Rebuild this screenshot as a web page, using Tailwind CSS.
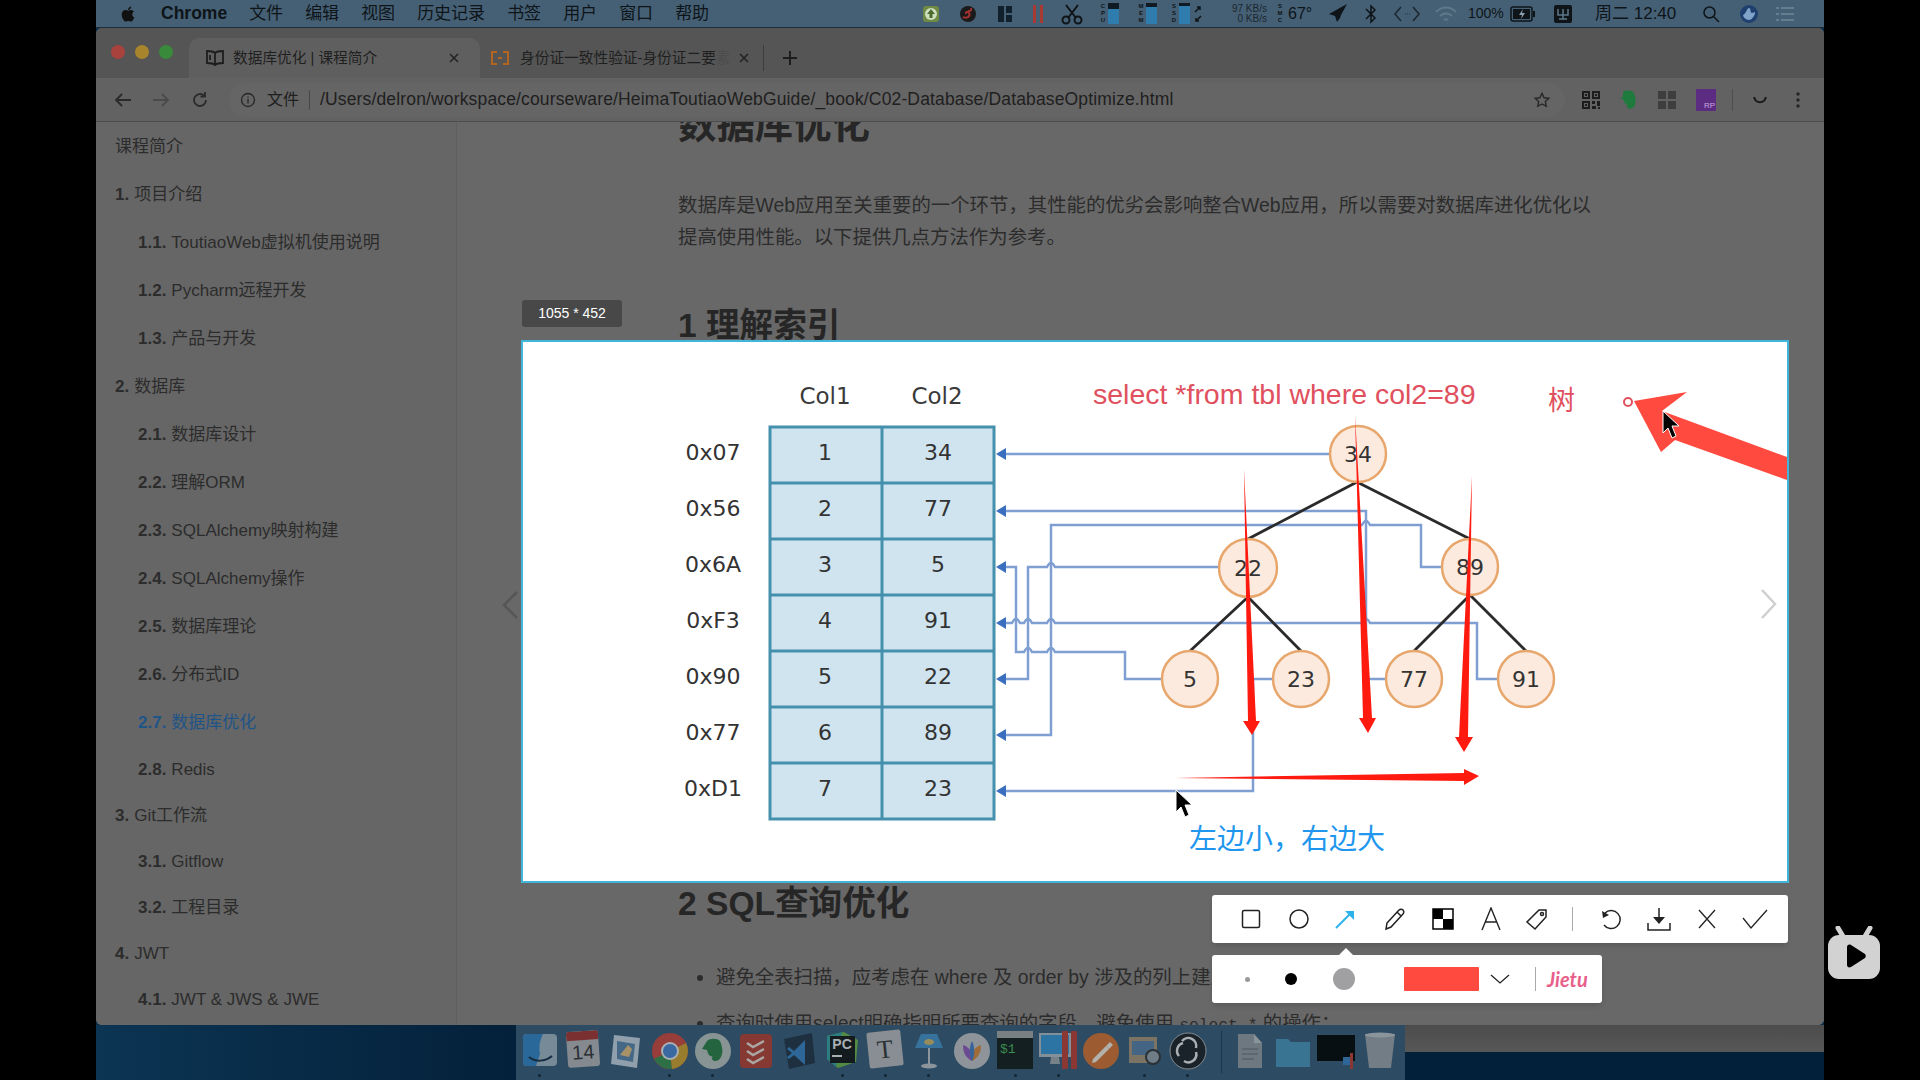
<!DOCTYPE html>
<html lang="zh">
<head>
<meta charset="utf-8">
<title>数据库优化</title>
<script src="https://cdn.jsdelivr.net/npm/@tailwindcss/browser@4"></script>
</head>
<body class="bg-black">
<div class="relative w-[1920px] h-[1080px] overflow-hidden bg-black [font-family:'Liberation_Sans','Noto_Sans_CJK_SC',sans-serif]">
  <div class="ml-[96px] w-[1728px] h-[1080px] flex flex-col bg-[#0a2c47]">

    <!-- menu bar -->
    <div class="h-[28px] shrink-0 flex items-center bg-[#456075] border-b border-[#1d2d3a] text-[#0e1418]">
      <div class="w-[826px] shrink-0 flex items-center text-[17px] gap-[22px]">
        <svg class="ml-[22px] -mr-[2px]" width="20" height="20" viewBox="0 0 24 24" fill="#111"><path d="M17.05 20.28c-.98.95-2.05.8-3.08.35-1.09-.46-2.09-.48-3.24 0-1.44.62-2.2.44-3.06-.35C2.79 15.25 3.51 7.59 9.05 7.31c1.35.07 2.29.74 3.08.8 1.18-.24 2.31-.93 3.57-.84 1.51.12 2.65.72 3.4 1.8-3.12 1.87-2.38 5.98.48 7.13-.57 1.5-1.31 2.99-2.54 4.09zM12.03 7.25c-.15-2.23 1.66-4.07 3.74-4.25.29 2.58-2.34 4.5-3.74 4.25z"/></svg>
        <span class="font-bold text-[17.5px] ml-[3px]">Chrome</span>
        <span>文件</span><span>编辑</span><span>视图</span><span>历史记录</span><span>书签</span><span>用户</span><span>窗口</span><span>帮助</span>
      </div>
      <div class="flex items-center text-[16px]">
        <svg width="18" height="20" viewBox="0 0 18 20"><rect x="1" y="2" width="16" height="16" rx="3" fill="#6f8a45"/><circle cx="9" cy="10" r="6" fill="#cfe0c0"/><path d="M9 5l4 5h-2.500v4h-3v-4H5z" fill="#4c6b2e"/></svg>
        <svg class="ml-[19px]" width="18" height="20" viewBox="0 0 18 20"><circle cx="9" cy="10" r="8" fill="#1a1a1a"/><path d="M4 13c4 2 8-1 6-4-1-2-4-1-3 1M12 4c1 3-1 3-3 3" stroke="#a03030" stroke-width="2" fill="none"/></svg>
        <svg class="ml-[20px]" width="16" height="18" viewBox="0 0 16 18" fill="#10202c"><rect x="1" y="1" width="6" height="16"/><rect x="9" y="1" width="6" height="7"/><rect x="9" y="10" width="6" height="7"/></svg>
        <svg class="ml-[19px]" width="12" height="20" viewBox="0 0 12 20" fill="#a83a34"><rect x="1" y="1" width="3" height="18"/><rect x="8" y="1" width="3" height="18"/></svg>
        <svg class="ml-[16px]" width="24" height="22" viewBox="0 0 24 22" fill="none" stroke="#0e1418" stroke-width="2"><path d="M6 2l10 13M18 2L8 15"/><circle cx="6" cy="17" r="3.500"/><circle cx="18" cy="17" r="3.500"/></svg>
        <div class="ml-[16px] w-[20px] shrink-0 flex items-center gap-[2px]"><span class="w-[6px] shrink-0 flex flex-col items-center text-[6px] leading-[7px] font-bold"><span>C</span><span>P</span><span>U</span></span><span class="w-[11px] h-[21px] shrink-0 bg-[#0f1a22] flex items-end"><span class="w-full h-[15px] bg-[#2f7cae]"></span></span></div>
        <div class="ml-[18px] w-[20px] shrink-0 flex items-center gap-[2px]"><span class="w-[6px] shrink-0 flex flex-col items-center text-[6px] leading-[7px] font-bold"><span>M</span><span>E</span><span>M</span></span><span class="w-[11px] h-[21px] shrink-0 bg-[#0f1a22] flex items-end"><span class="w-full h-[17px] bg-[#2f7cae]"></span></span></div>
        <div class="ml-[13px] w-[20px] shrink-0 flex items-center gap-[2px]"><span class="w-[6px] shrink-0 flex flex-col items-center text-[6px] leading-[7px] font-bold"><span>S</span><span>S</span><span>D</span></span><span class="w-[11px] h-[21px] shrink-0 bg-[#0f1a22] flex items-end"><span class="w-full h-[18px] bg-[#2f7cae]"></span></span></div>
        <svg class="ml-[2px]" width="10" height="20" viewBox="0 0 10 20" fill="none" stroke="#0e1418" stroke-width="1.500"><path d="M2 8l5-5M4 3h3v3M8 12l-5 5M6 17H3v-3"/></svg>
        <div class="ml-[24px] w-[40px] text-[10px] leading-[10px] text-right text-[#1c262e]"><div>97 KB/s</div><div>0 KB/s</div></div>
        <span class="ml-[9px] w-[8px] flex flex-col items-center text-[6px] leading-[7px] font-bold"><span>S</span><span>M</span><span>C</span></span>
        <span class="ml-[4px] w-[30px] text-[16px]">67°</span>
        <svg class="ml-[10px]" width="20" height="22" viewBox="0 0 20 22" fill="#0e1418"><path d="M19 1L1 11l6 2 2 6 3-4 1-3z"/></svg>
        <svg class="ml-[16px]" width="14" height="20" viewBox="0 0 14 20" fill="none" stroke="#0e1418" stroke-width="1.500"><path d="M2 5l9 9-4 4V2l4 4-9 9"/></svg>
        <svg class="ml-[15px]" width="28" height="20" viewBox="0 0 28 20" fill="none" stroke="#1c262e" stroke-width="1.500"><path d="M8 3l-6 7 6 7M20 3l6 7-6 7"/><path d="M12 10h.8M14 10h.8M16 10h.8" stroke-width="1"/></svg>
        <svg class="ml-[13px]" width="24" height="20" viewBox="0 0 24 20" fill="none" stroke="#5f7889" stroke-width="2"><path d="M2 8c6-6 14-6 20 0M6 12c4-3.500 8-3.500 12 0M10 16c1.500-1.200 2.500-1.200 4 0"/></svg>
        <span class="ml-[10px] w-[38px] text-[14px] whitespace-nowrap">100%</span>
        <svg class="ml-[4px]" width="26" height="16" viewBox="0 0 26 16"><rect x="1" y="1" width="21" height="14" rx="2" fill="none" stroke="#0e1418" stroke-width="1.500"/><rect x="3" y="3" width="17" height="10" fill="#0e1418"/><path d="M13 3l-4 6h3l-1 4 4-6h-3z" fill="#8aa0b0"/><rect x="23" y="5" width="2" height="6" fill="#0e1418"/></svg>
        <svg class="ml-[17px]" width="20" height="20" viewBox="0 0 20 20"><rect x="1" y="1" width="18" height="18" rx="2" fill="#0e1418"/><path d="M5 5v6h10V5M10 5v10M6 15h8" stroke="#5f7889" stroke-width="1.500" fill="none"/></svg>
        <span class="ml-[22px] w-[80px] text-[17px] whitespace-nowrap">周二 12:40</span>
        <svg class="ml-[27px]" width="18" height="18" viewBox="0 0 18 18" fill="none" stroke="#0e1418" stroke-width="1.500"><circle cx="7.500" cy="7.500" r="5.500"/><path d="M11.500 11.500L17 17"/></svg>
        <svg class="ml-[19px]" width="20" height="20" viewBox="0 0 20 20"><circle cx="10" cy="10" r="9" fill="#1f3f6e"/><path d="M4 11c3-1 4-7 6-7s1 5 3 5 3-2 3 0-3 7-6 7-6-3-6-5z" fill="#7fa3c9"/></svg>
        <svg class="ml-[17px]" width="18" height="16" viewBox="0 0 18 16" stroke="#6f8798" stroke-width="1.500"><path d="M0 2h3M5 2h13M0 8h3M5 8h13M0 14h3M5 14h13"/></svg>
      </div>
    </div>

    <!-- chrome window -->
    <div class="h-[997px] shrink-0 flex flex-col overflow-hidden rounded-t-[6px] rounded-b-[6px] bg-[#686868]">
      <!-- tabs -->
      <div class="h-[50px] shrink-0 flex items-end bg-[#555555] text-[14.7px] text-[#1f1f1f]">
        <div class="w-[93px] shrink-0 h-full flex items-center pl-[15px] gap-[10px] pb-[2px]">
          <span class="w-[14px] h-[14px] rounded-full bg-[#a8423d]"></span>
          <span class="w-[14px] h-[14px] rounded-full bg-[#a8842c]"></span>
          <span class="w-[14px] h-[14px] rounded-full bg-[#3a8a3c]"></span>
        </div>
        <div class="w-[291px] shrink-0 h-[40px] bg-[#5f5f5f] rounded-t-[10px] flex items-center pl-[16px]">
          <svg class="shrink-0" width="20" height="18" viewBox="0 0 20 18" fill="none" stroke="#1d1d1d" stroke-width="1.800"><path d="M10 4C8 2 5 2 2 2v12c3 0 6 0 8 2 2-2 5-2 8-2V2c-3 0-6 0-8 2zM10 4v12M5 6v5"/></svg>
          <span class="ml-[8px] w-[215px] shrink-0 whitespace-nowrap">数据库优化 | 课程简介</span>
          <svg class="shrink-0" width="12" height="12" viewBox="0 0 12 12" stroke="#222" stroke-width="1.500"><path d="M2 2l8 8M10 2l-8 8"/></svg>
        </div>
        <div class="h-[40px] flex items-center pl-[10px]">
          <svg class="shrink-0" width="20" height="16" viewBox="0 0 20 16" fill="none" stroke="#b3641f" stroke-width="2"><path d="M7 2H2v12h5M13 2h5v12h-5M8 8h4"/></svg>
          <span class="ml-[10px] w-[211px] shrink-0 whitespace-nowrap">身份证一致性验证-身份证二要<span class="text-[#4c4c4c]">素</span></span>
          <svg class="ml-[7px] shrink-0" width="12" height="12" viewBox="0 0 12 12" stroke="#222" stroke-width="1.500"><path d="M2 2l8 8M10 2l-8 8"/></svg>
          <span class="ml-[13px] w-px h-[26px] shrink-0 bg-[#3d3d3d]"></span>
          <svg class="ml-[18px] shrink-0" width="16" height="16" viewBox="0 0 16 16" stroke="#1d1d1d" stroke-width="2"><path d="M8 1v14M1 8h14"/></svg>
        </div>
      </div>
      <!-- toolbar -->
      <div class="h-[44px] shrink-0 flex items-center bg-[#626262] border-b border-[#4d4d4d] text-[16px] text-[#202020]">
        <svg class="ml-[18px]" width="18" height="16" viewBox="0 0 18 16" fill="none" stroke="#2a2a2a" stroke-width="1.800"><path d="M17 8H2M8 2L2 8l6 6"/></svg>
        <svg class="ml-[20px]" width="18" height="16" viewBox="0 0 18 16" fill="none" stroke="#4a4a4a" stroke-width="1.800"><path d="M1 8h15M10 2l6 6-6 6"/></svg>
        <svg class="ml-[21px]" width="18" height="18" viewBox="0 0 18 18" fill="none" stroke="#2a2a2a" stroke-width="1.800"><path d="M15 9a6 6 0 1 1-2-4.500M14 1v4.500H9.500"/></svg>
        <div class="ml-[20px] w-[1336px] h-[34px] rounded-[17px] bg-[#656565] flex items-center">
          <svg class="ml-[11px]" width="16" height="16" viewBox="0 0 16 16" fill="none" stroke="#262626" stroke-width="1.300"><circle cx="8" cy="8" r="6.500"/><path d="M8 7v4.500M8 4.500v1.200"/></svg>
          <span class="ml-[11px]">文件</span>
          <span class="ml-[10px] w-px h-[20px] bg-[#474747]"></span>
          <span class="ml-[10px] whitespace-nowrap text-[17.5px] tracking-[0.15px] [font-family:'Liberation_Sans',sans-serif]">/Users/delron/workspace/courseware/HeimaToutiaoWebGuide/_book/C02-Database/DatabaseOptimize.html</span>
        </div>
        <svg class="-ml-[32px]" width="18" height="18" viewBox="0 0 24 24" fill="none" stroke="#262626" stroke-width="1.800"><path d="M12 3l2.800 6 6.400.7-4.800 4.300 1.300 6.400L12 17.200 6.300 20.400l1.300-6.400L2.800 9.700 9.200 9z"/></svg>
        <svg class="ml-[30px]" width="20" height="20" viewBox="0 0 20 20" fill="#1d1d1d"><path d="M1 1h8v8H1zM3 3v4h4V3zM4 4h2v2H4zM11 1h8v8h-8zM13 3v4h4V3zM14 4h2v2h-2zM1 11h8v8H1zM3 13v4h4v-4zM4 14h2v2H4zM11 11h3v3h-3zM16 11h3v5h-3zM11 16h4v3h-4zM17 17h2v2h-2z" fill-rule="evenodd"/></svg>
        <svg class="ml-[17px]" width="20" height="22" viewBox="0 0 20 22"><path d="M5 3c2-2 9-2 11 1 2 5 2 9 1 12-1 4-7 5-8 2-1-2 2-3 3-2-4 0-6-2-7-6L1 9l4-1z" fill="#1f7a3e"/></svg>
        <svg class="ml-[20px]" width="18" height="18" viewBox="0 0 18 18" fill="#3e3e3e"><rect x="0" y="0" width="8" height="8"/><rect x="10" y="0" width="8" height="8"/><rect x="0" y="10" width="8" height="8"/><rect x="10" y="10" width="8" height="8"/></svg>
        <div class="ml-[20px] w-[20px] h-[22px] bg-[#5b2c82] flex items-end justify-end text-[8px] leading-[10px] text-[#c9a7e0] pr-[1px]">RP</div>
        <span class="ml-[16px] w-px h-[22px] bg-[#4d4d4d]"></span>
        <svg class="ml-[18px]" width="18" height="10" viewBox="0 0 18 10" fill="none" stroke="#1a1a1a" stroke-width="2"><path d="M3 2c2 7 10 7 12 0"/></svg>
        <svg class="ml-[27px]" width="4" height="18" viewBox="0 0 4 18" fill="#262626"><circle cx="2" cy="3" r="1.700"/><circle cx="2" cy="9" r="1.700"/><circle cx="2" cy="15" r="1.700"/></svg>
      </div>
      <!-- body -->
      <div class="flex-1 flex min-h-0 text-[#2c2c2c]">
        <div class="w-[361px] shrink-0 border-r border-[#5f5f5f] bg-[#666666] text-[17px] overflow-hidden flex flex-col">
          <div class="h-[49px] shrink-0 flex items-center pl-[19px]">课程简介</div>
          <div class="h-12 shrink-0 flex items-center pl-[19px]"><b class="mr-[5px]">1.</b>项目介绍</div>
          <div class="h-12 shrink-0 flex items-center pl-[42px]"><b class="mr-[5px]">1.1.</b>ToutiaoWeb虚拟机使用说明</div>
          <div class="h-12 shrink-0 flex items-center pl-[42px]"><b class="mr-[5px]">1.2.</b>Pycharm远程开发</div>
          <div class="h-12 shrink-0 flex items-center pl-[42px]"><b class="mr-[5px]">1.3.</b>产品与开发</div>
          <div class="h-12 shrink-0 flex items-center pl-[19px]"><b class="mr-[5px]">2.</b>数据库</div>
          <div class="h-12 shrink-0 flex items-center pl-[42px]"><b class="mr-[5px]">2.1.</b>数据库设计</div>
          <div class="h-12 shrink-0 flex items-center pl-[42px]"><b class="mr-[5px]">2.2.</b>理解ORM</div>
          <div class="h-12 shrink-0 flex items-center pl-[42px]"><b class="mr-[5px]">2.3.</b>SQLAlchemy映射构建</div>
          <div class="h-12 shrink-0 flex items-center pl-[42px]"><b class="mr-[5px]">2.4.</b>SQLAlchemy操作</div>
          <div class="h-12 shrink-0 flex items-center pl-[42px]"><b class="mr-[5px]">2.5.</b>数据库理论</div>
          <div class="h-12 shrink-0 flex items-center pl-[42px]"><b class="mr-[5px]">2.6.</b>分布式ID</div>
          <div class="h-12 shrink-0 flex items-center pl-[42px] text-[#1f5488]"><b class="mr-[5px]">2.7.</b>数据库优化</div>
          <div class="h-[46px] shrink-0 flex items-center pl-[42px]"><b class="mr-[5px]">2.8.</b>Redis</div>
          <div class="h-[46px] shrink-0 flex items-center pl-[19px]"><b class="mr-[5px]">3.</b>Git工作流</div>
          <div class="h-[46px] shrink-0 flex items-center pl-[42px]"><b class="mr-[5px]">3.1.</b>Gitflow</div>
          <div class="h-[46px] shrink-0 flex items-center pl-[42px]"><b class="mr-[5px]">3.2.</b>工程目录</div>
          <div class="h-[46px] shrink-0 flex items-center pl-[19px]"><b class="mr-[5px]">4.</b>JWT</div>
          <div class="h-[45px] shrink-0 flex items-center pl-[42px]"><b class="mr-[5px]">4.1.</b>JWT &amp; JWS &amp; JWE</div>
        </div>
        <div class="flex-1 overflow-hidden pl-[221px] text-[19.4px] leading-[32px] bg-[#686868]">
          <h1 class="-mt-[16px] text-[38.4px] leading-[38px] font-bold text-[#262626]">数据库优化</h1>
          <p class="mt-[45px] w-[920px]">数据库是Web应用至关重要的一个环节，其性能的优劣会影响整合Web应用，所以需要对数据库进化优化以提高使用性能。以下提供几点方法作为参考。</p>
          <h2 class="mt-[53px] text-[33.6px] leading-[40px] font-bold text-[#262626]">1 理解索引</h2>
          <h2 class="mt-[538px] text-[33.6px] leading-[40px] font-bold text-[#262626]">2 SQL查询优化</h2>
          <ul class="mt-[37px] list-disc pl-[38px] w-[1000px]">
            <li class="whitespace-nowrap">避免全表扫描，应考虑在 where 及 order by 涉及的列上建立索引；</li>
            <li class="mt-[14px] whitespace-nowrap">查询时使用select明确指明所要查询的字段，避免使用 <span class="[font-family:'Liberation_Mono',monospace] text-[16.3px]">select *</span> 的操作；</li>
          </ul>
        </div>
      </div>
    </div>

    <!-- bottom: desktop and dock -->
    <div class="flex-1 flex min-h-0">
      <div class="w-[420px] bg-gradient-to-r from-[#0c3553] to-[#04203a]"></div>
      <div class="w-[889px] h-full bg-[#2d4c63] flex items-start pl-[2.4px] [&>div]:opacity-80">
        <div class="relative w-[43.2px] h-full flex justify-center pt-[6px]"><svg width="38" height="40" viewBox="0 0 38 40"><rect x="2" y="3" width="34" height="32" rx="4" fill="#8a9aa5"/><path d="M2 7a4 4 0 0 1 4-4h16c-4 8-4 14-3 20l-4 12H6a4 4 0 0 1-4-4z" fill="#2a6fa8"/><path d="M8 26c6 5 16 5 23-1" stroke="#10263a" stroke-width="2" fill="none"/></svg><span class="absolute bottom-[3px] w-[3px] h-[3px] rounded-full bg-[#0c1a26]"></span></div>
        <div class="relative w-[43.2px] h-full flex justify-center pt-[6px]"><div class="w-[32px] h-[36px] bg-[#9a9a9a] rounded-[3px] rotate-[-4deg] overflow-hidden flex flex-col items-center text-[#2a2a2a]"><span class="w-full h-[9px] bg-[#8e2a25]"></span><span class="text-[20px] leading-[24px]">14</span></div></div>
        <div class="relative w-[43.2px] h-full flex justify-center pt-[6px]"><svg width="36" height="40" viewBox="0 0 36 40"><path d="M6 4l26 3-3 30-26-4z" fill="#a9b4bd"/><path d="M9 10l18 3-2 18-16-3z" fill="#4c6f90"/><path d="M12 24l8-10 4 4-3 8z" fill="#c8a468"/></svg></div>
        <div class="relative w-[43.2px] h-full flex justify-center pt-[6px]"><svg width="40" height="40" viewBox="0 0 40 40"><circle cx="20" cy="20" r="18" fill="#b23a30"/><path d="M20 20L4 28a18 18 0 0 0 18 10z" fill="#2f7a3e"/><path d="M20 20l16-8a18 18 0 0 1-14 26z" fill="#b58a22"/><circle cx="20" cy="20" r="9" fill="#c9c9c9"/><circle cx="20" cy="20" r="7" fill="#3e6fb0"/></svg><span class="absolute bottom-[3px] w-[3px] h-[3px] rounded-full bg-[#0c1a26]"></span></div>
        <div class="relative w-[43.2px] h-full flex justify-center pt-[6px]"><svg width="38" height="40" viewBox="0 0 38 40"><circle cx="19" cy="20" r="18" fill="#9fa6a0"/><path d="M13 10c3-3 10-3 13 0 3 7 3 12 1 16-2 5-8 5-9 2-1-2 2-3 3-2-5 0-7-2-8-7l-5-1z" fill="#226c38"/></svg><span class="absolute bottom-[3px] w-[3px] h-[3px] rounded-full bg-[#0c1a26]"></span></div>
        <div class="relative w-[43.2px] h-full flex justify-center pt-[6px]"><svg width="38" height="40" viewBox="0 0 38 40"><rect x="3" y="3" width="32" height="34" rx="4" fill="#9c3527"/><path d="M10 12l6 4 11-6M10 20l6 4 11-6M10 28l6 4 11-6" stroke="#c9bdb5" stroke-width="2.500" fill="none"/></svg></div>
        <div class="relative w-[43.2px] h-full flex justify-center pt-[6px]"><svg width="38" height="40" viewBox="0 0 38 40"><path d="M4 8l28-6 3 30-26 6z" fill="#1b2a38"/><path d="M25 9L14 20l-5-4-2 2 5 4-5 4 2 2 5-4 11 10V9z" fill="#2f6ea5"/></svg></div>
        <div class="relative w-[43.2px] h-full flex justify-center pt-[6px]"><div class="relative w-[36px] h-[38px]"><svg class="absolute inset-0" width="36" height="38" viewBox="0 0 36 38"><path d="M3 5L20 1l14 8-2 22-18 6L3 28z" fill="#5e9b3a"/><path d="M3 5L18 1 12 36 3 28z" fill="#2b8a86"/></svg><div class="absolute left-[6px] top-[5px] w-[25px] h-[27px] bg-[#0f0f0f] text-[#c9c9c9] text-[14px] leading-[16px] font-bold pl-[2px]">PC<div class="mt-[3px] w-[10px] h-[2px] bg-[#c9c9c9]"></div></div></div><span class="absolute bottom-[3px] w-[3px] h-[3px] rounded-full bg-[#0c1a26]"></span></div>
        <div class="relative w-[43.2px] h-full flex justify-center pt-[6px]"><div class="w-[34px] h-[36px] bg-[#9f9f9f] rotate-[-6deg] rounded-[2px] flex items-center justify-center text-[26px] text-[#2a2a2a] [font-family:'Liberation_Serif',serif]">T</div><span class="absolute bottom-[3px] w-[3px] h-[3px] rounded-full bg-[#0c1a26]"></span></div>
        <div class="relative w-[43.2px] h-full flex justify-center pt-[6px]"><svg width="36" height="40" viewBox="0 0 36 40"><path d="M10 3h16l6 14H4z" fill="#3a7cac"/><ellipse cx="18" cy="11" rx="5" ry="3" fill="#b59c5a"/><path d="M18 17v17" stroke="#a4a8ab" stroke-width="2"/><ellipse cx="18" cy="35" rx="8" ry="2.500" fill="#a4a8ab"/></svg><span class="absolute bottom-[3px] w-[3px] h-[3px] rounded-full bg-[#0c1a26]"></span></div>
        <div class="relative w-[43.2px] h-full flex justify-center pt-[6px]"><svg width="38" height="40" viewBox="0 0 38 40"><circle cx="19" cy="20" r="18" fill="#a7a7a7"/><path d="M19 30c-6-3-9-8-9-16 4 1 7 4 9 8z" fill="#7b4aa0"/><path d="M19 30c6-3 9-8 9-16-4 1-7 4-9 8z" fill="#b9742e"/><path d="M19 30c-3-6-3-14 0-20 3 6 3 14 0 20z" fill="#3c6aa8"/></svg></div>
        <div class="relative w-[43.2px] h-full flex justify-center pt-[6px]"><div class="w-[36px] h-[38px] bg-[#0e1412] border-t-[7px] border-[#8d8d8d] text-[#3f9a4a] text-[13px] leading-[14px] pl-[3px] pt-[5px] [font-family:'Liberation_Mono',monospace]">$1</div><span class="absolute bottom-[3px] w-[3px] h-[3px] rounded-full bg-[#0c1a26]"></span></div>
        <div class="relative w-[43.2px] h-full flex justify-center pt-[6px]"><svg width="40" height="40" viewBox="0 0 40 40"><rect x="1" y="2" width="32" height="24" fill="#9aa2a6"/><rect x="3" y="4" width="28" height="19" fill="#2c7fb5"/><path d="M13 26h8l1 7H12z" fill="#8a8f92"/><rect x="24" y="0" width="6" height="38" rx="1" fill="#a3342a"/><rect x="33" y="0" width="6" height="38" rx="1" fill="#a3342a"/></svg><span class="absolute bottom-[3px] w-[3px] h-[3px] rounded-full bg-[#0c1a26]"></span></div>
        <div class="relative w-[43.2px] h-full flex justify-center pt-[6px]"><svg width="38" height="40" viewBox="0 0 38 40"><circle cx="19" cy="20" r="18" fill="#b95f25"/><path d="M11 28l13-13 3 3-13 13-4 1z" fill="#d4cbc0"/><path d="M24 15l4-4 3 3-4 4z" fill="#d4cbc0"/></svg></div>
        <div class="relative w-[43.2px] h-full flex justify-center pt-[6px]"><svg width="38" height="40" viewBox="0 0 38 40"><rect x="3" y="6" width="28" height="26" fill="#8f7f66"/><rect x="6" y="10" width="22" height="14" fill="#4a6c8c"/><circle cx="27" cy="26" r="7" fill="#7f8a8f" stroke="#2a2a2a" stroke-width="2"/></svg><span class="absolute bottom-[3px] w-[3px] h-[3px] rounded-full bg-[#0c1a26]"></span></div>
        <div class="relative w-[43.2px] h-full flex justify-center pt-[6px]"><svg width="38" height="40" viewBox="0 0 38 40"><circle cx="19" cy="20" r="18" fill="#17191c" stroke="#9a9a9a" stroke-width="1"/><path d="M13 10a8 8 0 0 1 14 7M27 21a8 8 0 0 1-12 9M10 25a8 8 0 0 1 4-13" stroke="#c9c9c9" stroke-width="2.500" fill="none"/></svg><span class="absolute bottom-[3px] w-[3px] h-[3px] rounded-full bg-[#0c1a26]"></span></div>
        <span class="ml-[11.400px] mt-[6px] w-px h-[42px] bg-[#1c3548]"></span>
        <div class="ml-[6.800px] relative w-[43.2px] h-full flex justify-center pt-[6px]"><svg width="30" height="40" viewBox="0 0 30 40"><path d="M3 3h16l8 9v25H3z" fill="#7d8388"/><path d="M19 3v9h8" fill="#a0a5a8"/><path d="M7 18h16M7 23h16M7 28h12" stroke="#62686c" stroke-width="1.500"/></svg></div>
        <div class="relative w-[43.2px] h-full flex justify-center pt-[6px]"><svg width="38" height="40" viewBox="0 0 38 40"><path d="M2 8h12l3 3h19v25H2z" fill="#3e7ea0"/></svg></div>
        <div class="relative w-[43.2px] h-full flex justify-center pt-[6px]"><svg width="40" height="40" viewBox="0 0 40 40"><rect x="0" y="4" width="38" height="26" fill="#000"/><rect x="26" y="26" width="8" height="8" fill="#2f6ea5"/><rect x="33" y="22" width="3" height="16" fill="#a3342a"/></svg></div>
        <div class="relative w-[43.2px] h-full flex justify-center pt-[6px]"><svg width="34" height="40" viewBox="0 0 34 40"><path d="M2 3h30l-4 34H6z" fill="#848a8e"/><ellipse cx="17" cy="4" rx="15" ry="2.500" fill="#a1a6a9"/></svg></div>
      </div>
      <div class="flex-1 flex flex-col">
        <div class="h-[27px] shrink-0 bg-gradient-to-b from-[#4c4c4c] to-[#575757]"></div>
        <div class="flex-1 bg-[#03203a]"></div>
      </div>
    </div>
  </div>

  <!-- prev chevron -->
  <svg class="absolute left-[501px] top-[590px]" width="18" height="30" viewBox="0 0 18 30" fill="none" stroke="#565656" stroke-width="2.500"><path d="M16 2L3 15l13 13"/></svg>

  <!-- size label -->
  <div class="absolute left-[522px] top-[300px] w-[100px] h-[27px] rounded-[3px] bg-[#484848] text-white text-[14px] flex items-center justify-center">1055 * 452</div>

  <!-- captured image -->
  <svg class="absolute left-[521px] top-[340px] [font-family:'DejaVu_Sans',sans-serif]" width="1268" height="543" viewBox="521 340 1268 543">
    <rect x="522" y="341" width="1266" height="541" fill="#fff" stroke="#3fb6da" stroke-width="2"/>
    <g font-size="23" fill="#3a3a3a" text-anchor="middle">
      <text x="825" y="404">Col1</text><text x="937" y="404">Col2</text>
    </g>
    <rect x="770" y="427" width="224" height="392" fill="#cfe4ef"/>
    <path d="M770 427h224v392H770zM770 483h224M770 539h224M770 595h224M770 651h224M770 707h224M770 763h224M882 427v392" fill="none" stroke="#4590ad" stroke-width="3"/>
    <g font-size="22" fill="#333" text-anchor="middle">
      <text x="713" y="460">0x07</text><text x="713" y="516">0x56</text><text x="713" y="572">0x6A</text><text x="713" y="628">0xF3</text><text x="713" y="684">0x90</text><text x="713" y="740">0x77</text><text x="713" y="796">0xD1</text>
      <text x="825" y="460">1</text><text x="825" y="516">2</text><text x="825" y="572">3</text><text x="825" y="628">4</text><text x="825" y="684">5</text><text x="825" y="740">6</text><text x="825" y="796">7</text>
      <text x="938" y="460">34</text><text x="938" y="516">77</text><text x="938" y="572">5</text><text x="938" y="628">91</text><text x="938" y="684">22</text><text x="938" y="740">89</text><text x="938" y="796">23</text>
    </g>
    <!-- pointers -->
    <g fill="none" stroke="#7f9fd2" stroke-width="2.500">
      <path d="M1329 454H1000"/>
      <path d="M1385 679H1366V511H1000"/>
      <path d="M1442 567H1421V525H1370Q1366 517 1362 525H1051V735H1000"/>
      <path d="M1218 567H1055Q1051 559 1047 567H1028V679H1000"/>
      <path d="M1162 679H1125V652H1055Q1051 644 1047 652H1032Q1028 644 1024 652H1016V567H1000"/>
      <path d="M1498 679H1477V623H1370Q1366 615 1362 623H1055Q1051 615 1047 623H1032Q1028 615 1024 623H1020Q1016 615 1012 623H1000"/>
      <path d="M1273 679H1253V791H1000"/>
    </g>
    <g fill="#3a6fc0">
      <path d="M996 454l10-6v12z"/><path d="M996 511l10-6v12z"/><path d="M996 567l10-6v12z"/><path d="M996 623l10-6v12z"/><path d="M996 679l10-6v12z"/><path d="M996 735l10-6v12z"/><path d="M996 791l10-6v12z"/>
    </g>
    <!-- tree -->
    <path d="M1357 482L1248 539M1357 482L1470 539M1248 597L1190 651M1248 597L1301 651M1470 595L1414 651M1470 595L1526 651" stroke="#2a2a2a" stroke-width="2.800" fill="none"/>
    <g fill="#fbeadd" stroke="#e7a66c" stroke-width="2.500">
      <ellipse cx="1358" cy="454" rx="28" ry="28"/>
      <ellipse cx="1248" cy="568" rx="29" ry="29"/>
      <ellipse cx="1470" cy="567" rx="28" ry="28"/>
      <ellipse cx="1190" cy="679" rx="28" ry="28"/>
      <ellipse cx="1301" cy="679" rx="28" ry="28"/>
      <ellipse cx="1414" cy="679" rx="28" ry="28"/>
      <ellipse cx="1526" cy="679" rx="28" ry="28"/>
    </g>
    <g font-size="22" fill="#333" text-anchor="middle">
      <text x="1358" y="462">34</text><text x="1248" y="576">22</text><text x="1470" y="575">89</text><text x="1190" y="687">5</text><text x="1301" y="687">23</text><text x="1414" y="687">77</text><text x="1526" y="687">91</text>
    </g>
    <!-- annotations -->
    <text class="[font-family:'Liberation_Sans',sans-serif]" x="1093" y="404" font-size="28.500" fill="#e0505e">select *from tbl where col2=89</text>
    <text class="[font-family:'Noto_Sans_CJK_SC',sans-serif]" x="1548" y="410" font-size="27" fill="#e0505e">树</text>
    <text class="[font-family:'Noto_Sans_CJK_SC',sans-serif]" x="1189" y="849" font-size="28" fill="#2196ee">左边小，右边大</text>
    <g fill="#ff1a10">
      <path d="M1244 469L1248 721H1243L1252 735L1260 721H1256Z"/>
      <path d="M1355 415L1363 718H1359L1368 733L1376 718H1372Z"/>
      <path d="M1472 476L1459 737H1455L1464 752L1473 737H1468Z"/>
      <path d="M1175 778L1464 781V785L1479 776L1464 769V773Z"/>
    </g>
    <path d="M1634 401L1687 392L1662 411L1787 457V480L1675 440L1661 452Z" fill="#ff4a3f"/>
    <circle cx="1628" cy="402" r="4" fill="#fff" stroke="#e0505e" stroke-width="2"/>
    <path transform="translate(1663 411)" d="M0 0V22L5 17L9 27L13 25L9 15H16Z" fill="#000" stroke="#fff" stroke-width="1"/>
    <path transform="translate(1176 790)" d="M0 0V22L5 17L9 27L13 25L9 15H16Z" fill="#000" stroke="#fff" stroke-width="1"/>
    <path d="M1762 590l13 14-13 14" fill="none" stroke="#cfcfcf" stroke-width="2.500"/>
  </svg>

  <!-- capture toolbar -->
  <div class="absolute left-[1212px] top-[895px] w-[576px] h-[48px] rounded-[3px] bg-white shadow-md flex items-center pl-[15px]">
    <div class="w-[48px] flex justify-center"><svg width="22" height="22" viewBox="0 0 22 22" fill="none" stroke="#222" stroke-width="1.500"><rect x="2.500" y="2.500" width="17" height="17" rx="1.500"/></svg></div>
    <div class="w-[48px] flex justify-center"><svg width="22" height="22" viewBox="0 0 22 22" fill="none" stroke="#222" stroke-width="1.500"><circle cx="11" cy="11" r="9"/></svg></div>
    <div class="w-[48px] flex justify-center"><svg class="-ml-[4px]" width="24" height="24" viewBox="0 0 24 24" fill="none" stroke="#2bb3ea" stroke-width="2"><path d="M3 21L18 6"/><path d="M12 4h9v9z" fill="#2bb3ea" stroke="none"/></svg></div>
    <div class="w-[48px] flex justify-center"><svg width="24" height="24" viewBox="0 0 24 24" fill="none" stroke="#222" stroke-width="1.500"><path d="M4 16L16 3a2 2 0 0 1 4 4L8 20l-5 2zM14 5l4 4"/></svg></div>
    <div class="w-[48px] flex justify-center"><svg width="22" height="22" viewBox="0 0 22 22"><rect x="1" y="1" width="20" height="20" fill="#fff" stroke="#000" stroke-width="1.500"/><rect x="1" y="1" width="10" height="10" fill="#000"/><rect x="11" y="11" width="10" height="10" fill="#000"/></svg></div>
    <div class="w-[48px] flex justify-center"><svg width="22" height="24" viewBox="0 0 22 24" fill="none" stroke="#222" stroke-width="1.400"><path d="M2 23L11 1l9 22M5.500 15h11"/></svg></div>
    <div class="w-[48px] flex justify-center"><svg class="-ml-[4px]" width="24" height="24" viewBox="0 0 24 24" fill="none" stroke="#222" stroke-width="1.500"><path d="M14 3h7v7L10 22l-8-7z"/><circle cx="17" cy="7" r="1.500"/></svg></div>
    <span class="ml-[9px] w-px h-[24px] bg-[#aaa]"></span>
    <div class="ml-[14px] w-[48px] flex justify-center"><svg width="24" height="24" viewBox="0 0 24 24" fill="none" stroke="#222" stroke-width="1.500"><path d="M6 6a9 9 0 1 1-1 12"/><path d="M3 4l1 7 6-3z" fill="#222" stroke="none"/></svg></div>
    <div class="w-[48px] flex justify-center"><svg width="24" height="24" viewBox="0 0 24 24" fill="none" stroke="#222" stroke-width="1.500"><path d="M12 1v11"/><path d="M6 10h12l-6 7z" fill="#222" stroke="none"/><path d="M1 16v7h22v-7"/></svg></div>
    <div class="w-[48px] flex justify-center"><svg width="22" height="22" viewBox="0 0 22 22" stroke="#222" stroke-width="1.300"><path d="M3 2l16 18M19 2L3 20"/></svg></div>
    <div class="w-[48px] flex justify-center"><svg width="26" height="20" viewBox="0 0 26 20" fill="none" stroke="#222" stroke-width="1.300"><path d="M1 9l8 10L25 1"/></svg></div>
  </div>
  <div class="absolute left-[1339px] top-[948px] w-0 h-0 border-x-[7px] border-x-transparent border-b-[7px] border-b-white"></div>
  <div class="absolute left-[1212px] top-[955px] w-[390px] h-[48px] rounded-[3px] bg-white shadow-md flex items-center">
    <span class="ml-[33px] w-[5px] h-[5px] rounded-full bg-[#999]"></span>
    <span class="ml-[35px] w-[12px] h-[12px] rounded-full bg-black"></span>
    <span class="ml-[36px] w-[22px] h-[22px] rounded-full bg-[#a0a0a2]"></span>
    <span class="ml-[49px] w-[75px] h-[24px] rounded-[1px] bg-[#ff4a3f]"></span>
    <svg class="ml-[11px]" width="20" height="12" viewBox="0 0 20 12" fill="none" stroke="#222" stroke-width="1.300"><path d="M1 2l9 8 9-8"/></svg>
    <span class="ml-[25px] w-px h-[24px] bg-[#aaa]"></span>
    <span class="ml-[11px] text-[20px] italic font-bold text-[#e8608a] [font-family:'Lato',sans-serif]">Jietu</span>
  </div>

  <!-- tv badge -->
  <svg class="absolute left-[1827px] top-[926px]" width="54" height="54" viewBox="0 0 54 54"><path d="M17 12L11 2M37 12l6-10" stroke="#d2d2d2" stroke-width="5" stroke-linecap="round"/><rect x="1" y="9" width="52" height="44" rx="11" fill="#d2d2d2"/><path d="M20 21c0-2 2-3 4-2l14 9c1 1 1 3 0 4l-14 9c-2 1-4 0-4-2z" fill="#000"/></svg>
</div>
</body>
</html>
